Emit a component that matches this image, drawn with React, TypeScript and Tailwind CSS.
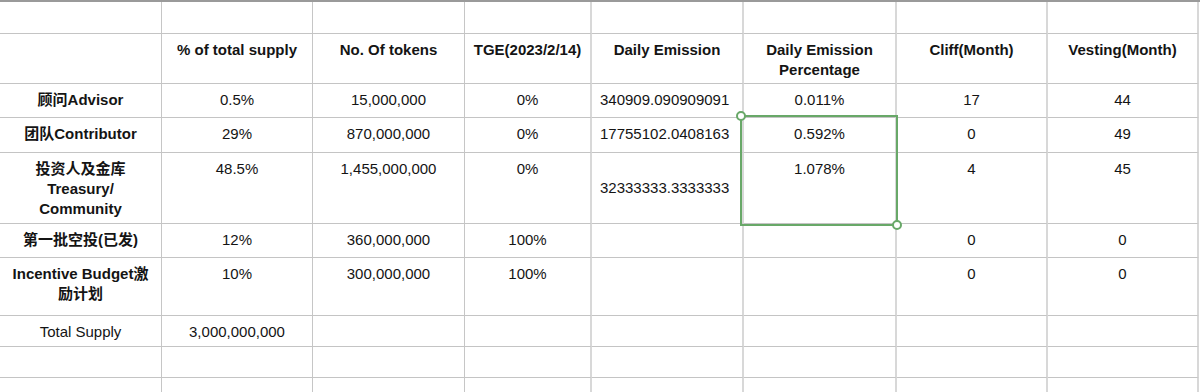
import React from 'react';

type Align = 'center' | 'left';

type CellData = {
  text?: React.ReactNode;
  bold?: boolean;
  align?: Align;
  middle?: boolean;
};

// column widths include the right border of each column
const colBorders = [
  'border-r border-r-[#c6c6c6]',
  'border-r border-r-[#c6c6c6]',
  'border-r border-r-[#c6c6c6]',
  'border-r-2 border-r-[#d8d8d8]',
  'border-r-2 border-r-[#d8d8d8]',
  'border-r-2 border-r-[#d8d8d8]',
  'border-r-2 border-r-[#d8d8d8]',
  'border-r-2 border-r-[#d8d8d8]'
];

const rowHeights = [
  'h-[32px]',
  'h-[50px]',
  'h-[34px]',
  'h-[35px]',
  'h-[71px]',
  'h-[34px]',
  'h-[58px]',
  'h-[31px]',
  'h-[31px]',
  'h-[31px]'
];

const h = (text: React.ReactNode): CellData => ({ text, bold: true });
const c = (text: React.ReactNode): CellData => ({ text });
const l = (text: React.ReactNode, middle = false): CellData => ({ text, align: 'left', middle });
const e: CellData = {};

const rows: CellData[][] = [
  [e, e, e, e, e, e, e, e],
  [
    e,
    h('% of total supply'),
    h('No. Of tokens'),
    h('TGE(2023/2/14)'),
    h('Daily Emission'),
    h(<>Daily Emission<br />Percentage</>),
    h('Cliff(Month)'),
    h('Vesting(Month)')
  ],
  [h('顾问Advisor'), c('0.5%'), c('15,000,000'), c('0%'), l('340909.090909091'), c('0.011%'), c('17'), c('44')],
  [h('团队Contributor'), c('29%'), c('870,000,000'), c('0%'), l('17755102.0408163'), c('0.592%'), c('0'), c('49')],
  [
    h(<>投资人及金库<br />Treasury/<br />Community</>),
    c('48.5%'),
    c('1,455,000,000'),
    c('0%'),
    l('32333333.3333333', true),
    c('1.078%'),
    c('4'),
    c('45')
  ],
  [h('第一批空投(已发)'), c('12%'), c('360,000,000'), c('100%'), e, e, c('0'), c('0')],
  [h(<>Incentive Budget激<br />励计划</>), c('10%'), c('300,000,000'), c('100%'), e, e, c('0'), c('0')],
  [c('Total Supply'), c('3,000,000,000'), e, e, e, e, e, e],
  [e, e, e, e, e, e, e, e],
  [e, e, e, e, e, e, e, e]
];

const Cell = ({ cell, col, row }: { cell: CellData; col: number; row: number }) => {
  const alignCls = cell.align === 'left' ? 'justify-start text-left pl-[8px]' : 'justify-center text-center';
  const vCls = cell.middle ? 'items-center' : 'items-start pt-[6px]';
  const weight = cell.bold ? 'font-bold' : 'font-normal';
  return (
    <div
      className={`flex ${alignCls} ${vCls} ${weight} ${colBorders[col]} ${rowHeights[row]} border-b border-b-[#c4c4c4] overflow-hidden`}
    >
      <span className="leading-[20px]">{cell.text}</span>
    </div>
  );
};

const App = () => {
  return (
    <div
      className="relative w-[1200px] h-[392px] overflow-hidden bg-white text-[15px] text-[#141414]"
      style={{ fontFamily: '"Liberation Sans", Arial, "Noto Sans CJK SC", sans-serif' }}
    >
      <div className="border-t-2 border-t-[#9a9a9a]">
        <div className="grid grid-cols-[162px_151px_152px_127px_152px_153px_151px_151px]">
          {rows.map((row, ri) =>
            row.map((cell, ci) => <Cell key={`${ri}-${ci}`} cell={cell} col={ci} row={ri} />)
          )}
        </div>
      </div>

      {/* Selection highlight over Daily Emission Percentage cells */}
      <div className="absolute left-[740px] top-[115px] w-[158px] h-[111px] border-2 border-solid border-[#68a868]">
        <div className="absolute -left-[6px] -top-[6px] w-[10px] h-[10px] rounded-full bg-white border-2 border-solid border-[#68a868]" />
        <div className="absolute -right-[6px] -bottom-[6px] w-[10px] h-[10px] rounded-full bg-white border-2 border-solid border-[#68a868]" />
      </div>
    </div>
  );
};

export default App;
